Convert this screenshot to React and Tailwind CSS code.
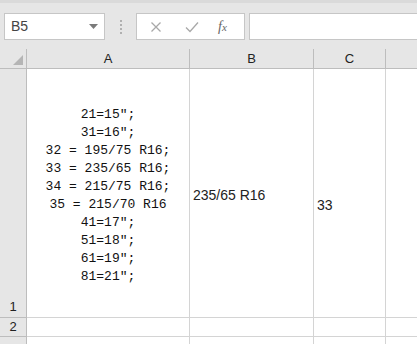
import React from 'react';

const lines = [
  '21=15″;',
  '31=16″;',
  '32 = 195/75 R16;',
  '33 = 235/65 R16;',
  '34 = 215/75 R16;',
  '35 = 215/70 R16',
  '41=17″;',
  '51=18″;',
  '61=19″;',
  '81=21″;',
];

export default function App() {
  const sans = { fontFamily: '"Liberation Sans", "Noto Sans CJK SC", sans-serif' };
  return (
    <div className="w-[417px] h-[344px] overflow-hidden bg-white text-[#222]" style={sans}>
      {/* formula bar */}
      <div className="h-[49px] bg-[#e6e6e6] border-t-[3px] border-[#dadada] flex items-start pt-[10px] pl-[4px] gap-0">
        <div className="w-[101px] h-[27px] bg-white border border-[#c6c6c6] flex items-center justify-between pl-[6px] pr-[6px]">
          <span className="text-[14px] text-[#444]">B5</span>
          <svg width="9" height="5" viewBox="0 0 9 5"><path d="M0 0h9L4.5 5z" fill="#7a7a7a" /></svg>
        </div>
        <div className="w-[31px] h-[27px] flex flex-col items-center justify-center gap-[2px]">
          <span className="w-[2px] h-[2px] bg-[#b0b0b0]" />
          <span className="w-[2px] h-[2px] bg-[#b0b0b0]" />
          <span className="w-[2px] h-[2px] bg-[#b0b0b0]" />
          <span className="w-[2px] h-[2px] bg-[#b0b0b0]" />
        </div>
        <div className="w-[109px] h-[27px] bg-white border border-[#c6c6c6] flex items-center pl-[13px]">
          <svg width="12" height="12" viewBox="0 0 12 12"><path d="M1.5 1.5l9 9M10.5 1.5l-9 9" stroke="#a8a8a8" strokeWidth="1.3" /></svg>
          <svg className="ml-[23px]" width="14" height="12" viewBox="0 0 14 12"><path d="M1 6.5l4 4L13 1.5" stroke="#a8a8a8" strokeWidth="1.3" fill="none" /></svg>
          <span className="ml-[19px] text-[14px] italic text-[#666]" style={{ fontFamily: '"Liberation Serif", serif' }}>f<span className="text-[11px]">x</span></span>
        </div>
        <div className="ml-[4px] flex-1 h-[27px] bg-white border border-[#c6c6c6] border-r-0" />
      </div>

      {/* sheet */}
      <div className="grid grid-cols-[27px_163px_124px_72px_1fr] grid-rows-[20px_249px_19px_20px] bg-white">
        {/* header row */}
        <div className="bg-[#e6e6e6] border-r border-b border-[#bdbdbd] flex items-end justify-end pr-[3px] pb-[3px]">
          <svg width="10" height="10" viewBox="0 0 10 10"><path d="M10 0v10H0z" fill="#b5b5b5" /></svg>
        </div>
        <div className="bg-[#e6e6e6] border-r border-b border-[#bdbdbd] flex items-center justify-center text-[13px]">A</div>
        <div className="bg-[#e6e6e6] border-r border-b border-[#bdbdbd] flex items-center justify-center text-[13px]">B</div>
        <div className="bg-[#e6e6e6] border-r border-b border-[#bdbdbd] flex items-center justify-center text-[13px]">C</div>
        <div className="bg-[#e6e6e6] border-b border-[#bdbdbd]" />

        {/* row 1 */}
        <div className="bg-[#e6e6e6] border-r border-b border-[#bdbdbd] flex items-end justify-center pb-[1px] text-[13px]">1</div>
        <div className="border-r border-b border-[#d4d4d4] flex items-center justify-center pt-[5px]">
          <div className="text-center whitespace-pre text-[13px] leading-[18px] text-[#111]" style={{ fontFamily: '"Liberation Mono", "DejaVu Sans Mono", monospace' }}>
            {lines.map((l, i) => <div key={i}>{l}</div>)}
          </div>
        </div>
        <div className="border-r border-b border-[#d4d4d4] pt-[116px] pl-[3px] text-[14px]">235/65 R16</div>
        <div className="border-r border-b border-[#d4d4d4] pt-[126px] pl-[3px] text-[14px]">33</div>
        <div className="border-b border-[#d4d4d4]" />

        {/* row 2 */}
        <div className="bg-[#e6e6e6] border-r border-b border-[#bdbdbd] flex items-end justify-center text-[13px]">2</div>
        <div className="border-r border-b border-[#d4d4d4]" />
        <div className="border-r border-b border-[#d4d4d4]" />
        <div className="border-r border-b border-[#d4d4d4]" />
        <div className="border-b border-[#d4d4d4]" />

        {/* row 3 */}
        <div className="bg-[#e6e6e6] border-r border-[#bdbdbd]" />
        <div className="border-r border-[#d4d4d4]" />
        <div className="border-r border-[#d4d4d4]" />
        <div className="border-r border-[#d4d4d4]" />
        <div />
      </div>
    </div>
  );
}
